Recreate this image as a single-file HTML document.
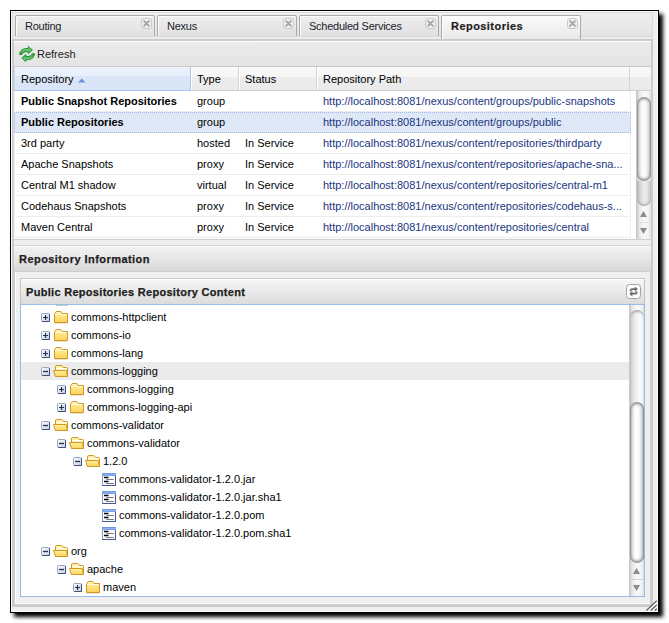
<!DOCTYPE html>
<html><head><meta charset="utf-8">
<style>
*{box-sizing:border-box;margin:0;padding:0}
html,body{width:669px;height:623px;background:#fff;overflow:hidden;position:relative;font-family:"Liberation Sans",sans-serif;font-size:11px;color:#000}
.a{position:absolute}
#win{left:10px;top:10px;width:649px;height:603px;border:1px solid #000;background:#efefef;box-shadow:4px 4px 4px 0 rgba(0,0,0,1),inset 1px 1px 0 #fafafa,inset -1px -1px 0 #fafafa}
#strip{left:12px;top:12px;width:641px;height:27px;border:1px solid #dadada;border-bottom:none;background:linear-gradient(#efefef,#e3e3e3 88.5%,#d9d9d9 88.5%,#d9d9d9 92.3%,#ececec 92.3%)}
.tab{top:15px;width:140px;height:21px;border:1px solid #a9a9a9;border-bottom:none;border-radius:2px 2px 0 0;background:linear-gradient(#efefef,#e0e0e0);box-shadow:inset 1px 1px 0 #fbfbfb}
.tab span{position:absolute;left:9px;top:4px;letter-spacing:-0.25px;color:#1c1c2c;line-height:13px}
.tab.act{background:linear-gradient(#fbfbfb,#e9e9e9);height:24px}
.tab.act span{font-weight:bold;letter-spacing:0.45px;color:#1e1e1e;-webkit-text-stroke:0.2px #1e1e1e}
.cls{position:absolute;right:2px;top:2px;width:11px;height:11px;border:1px solid #c9c9c9;border-radius:3px;background:#f0f0f0}
#body{left:12px;top:39px;width:641px;height:568px;border:2px solid #cbcbcb;background:#efefef}
#tb{left:14px;top:41px;width:637px;height:26px;border-top:1px solid #fff;border-bottom:1px solid #c8c8c8;background:linear-gradient(#ebebeb,#e4e4e4)}
#hdr{left:14px;top:67px;width:637px;height:24px;border-bottom:1px solid #cfcfcf;background:linear-gradient(#f9f9f9 0,#f5f5f5 45%,#ececec 45%,#eaeaea 100%)}
.hc{position:absolute;top:0;height:23px;border-right:1px solid #d4d4d4;box-shadow:inset 1px 0 0 #fff;line-height:25px;padding-left:6px}
.hc.sort{background:linear-gradient(#ebf2fc 0,#e7effb 41%,#dbe6f7 41%,#d9e5f6 100%);border:1px solid #a9c7ef;border-top:none;border-left-color:#c3d7f3;box-shadow:none;padding-left:6px;height:24px;line-height:25px}
#grid{left:14px;top:91px;width:637px;height:149px;background:#fff;border-bottom:1px solid #d0d0d0}
.row{position:absolute;left:0;width:617px;height:21px;border-bottom:1px solid #ededed;border-right:1px solid #ededed;line-height:20px}
.row.sel{background:#dfe8f6;border-bottom-color:transparent;outline:1px dotted #a3bae9;outline-offset:-1px}
.row span{position:absolute;top:0;white-space:nowrap}
.lnk{color:#1a3580}
.c1{left:7px}.c2{left:183px}.c3{left:231px}.c4{left:309px}

#rih{left:14px;top:245px;width:637px;height:27px;background:linear-gradient(#f3f3f3,#d9d9d9);border-top:1px solid #d3d3d3;border-bottom:1px solid #cdcdcd;box-shadow:inset 0 1px 0 #fafafa}
#rih b,#iph b{position:absolute;left:5px;top:7px;letter-spacing:0.45px;color:#1e1e1e;font-size:11px;-webkit-text-stroke:0.25px #1e1e1e}
#rib{left:14px;top:272px;width:637px;height:333px;background:#efefef;border:1px solid #d0d0d0;border-top:none;box-shadow:inset 1px -1px 0 #fbfbfb}
#ip{left:20px;top:278px;width:625px;height:319px;border:1px solid #c4c4c4;border-top:1px solid #c8c8c8;background:#fff}
#iph{left:21px;top:279px;width:623px;height:25px;background:linear-gradient(#f5f5f5,#dcdcdc);border-top:1px solid #fff}
#iph b{left:5px;top:6px;letter-spacing:0.3px}
#ipb{left:20px;top:304px;width:625px;height:293px;border:1px solid #99bbe8;background:#fff;overflow:hidden}
.tr{position:absolute;left:0;width:669px;height:18px;line-height:18px}
.tr span{top:0;white-space:nowrap;color:#000}
.tr.hl:before{content:"";position:absolute;left:21px;width:608px;top:0;height:18px;background:#ebebeb}
.sb{position:absolute;width:15px;background:linear-gradient(to right,#c9c9c9 0,#c9c9c9 7%,#e6e6e6 20%,#f8f8f8 50%,#f4f4f4 80%,#dedede)}
.th{position:absolute;left:1px;width:14px;border-radius:7px;background:linear-gradient(to right,#8c8c8c 0,#cfcfcf 12%,#f6f6f6 30%,#ffffff 45%,#f3f3f3 68%,#d6d6d6 86%,#858585 100%);box-shadow:inset 0 3px 3px -1px #8a8a8a,inset 0 -3px 3px -1px #8a8a8a}
.tk{position:absolute;left:1px;width:14px;border-radius:0 0 7px 7px;background:linear-gradient(to right,#b4b4b4,#d6d6d6 22%,#ececec 50%,#e4e4e4 75%,#bcbcbc);box-shadow:inset 0 -3px 3px -2px #9a9a9a}
.arr{position:absolute;left:0;width:15px;height:28px}
</style></head><body>
<svg width="0" height="0" style="position:absolute">
<defs>
<linearGradient id="gpb" x1="0" y1="0" x2="1" y2="1"><stop offset="0" stop-color="#ffffff"/><stop offset="1" stop-color="#c3cfe3"/></linearGradient>
<linearGradient id="gfold" x1="0" y1="0" x2="0" y2="1"><stop offset="0" stop-color="#fff6b8"/><stop offset="0.25" stop-color="#ffe98c"/><stop offset="1" stop-color="#fbd35c"/></linearGradient>
<linearGradient id="gfile" x1="0" y1="0" x2="0" y2="1"><stop offset="0" stop-color="#5d8de6"/><stop offset="0.5" stop-color="#8fb1f0"/><stop offset="1" stop-color="#6a98e8"/></linearGradient>
<g id="plus"><rect x="0.5" y="0.5" width="8" height="8" rx="1" fill="url(#gpb)" stroke="#9aa6bd"/><path d="M8.5 1.2V8.5H1.2" fill="none" stroke="#3d4e6e"/><path d="M2 4.5H7M4.5 2V7" stroke="#22324e" stroke-width="1.2"/></g>
<g id="minus"><rect x="0.5" y="0.5" width="8" height="8" rx="1" fill="url(#gpb)" stroke="#9aa6bd"/><path d="M8.5 1.2V8.5H1.2" fill="none" stroke="#3d4e6e"/><path d="M2 4.5H7" stroke="#22324e" stroke-width="1.3"/></g>
<g id="fold"><path d="M0.5 11.5V3Q0.5 2.5 1.2 2.2L2.2 0.5H6.8L8.3 2.5H13.5V11.5Z" fill="url(#gfold)" stroke="#cf9826" stroke-linejoin="round"/><path d="M1.3 3.5H12.7" stroke="#fffbe6" stroke-width="1"/><path d="M2.6 1.5H6.4" stroke="#fff6cc" stroke-width="1"/><path d="M0.5 12.5H13.5" stroke="#e8dcc0" stroke-width="0.8"/></g>
<g id="foldo"><path d="M2.5 11.5V2Q2.5 0.5 3.8 0.5H8.3Q9.4 0.5 9.9 1.6L10.4 2.5H13.5Q14.5 2.5 14.5 3.5V11.5Z" fill="#fff1a6" stroke="#cf9826"/><path d="M3.5 3.6H13.5" stroke="#ffffff" stroke-width="1.2"/><path d="M0.5 5.5H13.2L14.5 11.5H2.5Z" fill="url(#gfold)" stroke="#cf9826" stroke-linejoin="round"/></g>
<g id="file"><rect x="0.5" y="0.5" width="13" height="12" fill="#fbfcff" stroke="#8b9cc0"/><path d="M13.5 1V12.5H0.5" fill="none" stroke="#46598a"/><rect x="0" y="0" width="14" height="3" fill="url(#gfile)"/><path d="M2 4.5H6.5M2 8.5H6.5" stroke="#000" stroke-width="1.5"/><path d="M4.2 6.5H11.8M4.2 10.5H11.8" stroke="#7a7a7a" stroke-width="1.2"/></g>
</defs></svg>

<div id="win" class="a"></div>
<div id="strip" class="a"></div>
<div class="a tab" style="left:15px"><span>Routing</span><i class="cls"><svg width="9" height="9" style="position:absolute;left:0;top:0"><path d="M2.1 2.1L6.9 6.9M6.9 2.1L2.1 6.9" stroke="#a6a6a6" stroke-width="2" stroke-linecap="round"/></svg></i></div>
<div class="a tab" style="left:157px"><span>Nexus</span><i class="cls"><svg width="9" height="9" style="position:absolute;left:0;top:0"><path d="M2.1 2.1L6.9 6.9M6.9 2.1L2.1 6.9" stroke="#a6a6a6" stroke-width="2" stroke-linecap="round"/></svg></i></div>
<div class="a tab" style="left:299px"><span>Scheduled Services</span><i class="cls"><svg width="9" height="9" style="position:absolute;left:0;top:0"><path d="M2.1 2.1L6.9 6.9M6.9 2.1L2.1 6.9" stroke="#a6a6a6" stroke-width="2" stroke-linecap="round"/></svg></i></div>
<div id="body" class="a"></div>
<div class="a tab act" style="left:441px"><span>Repositories</span><i class="cls"><svg width="9" height="9" style="position:absolute;left:0;top:0"><path d="M2.1 2.1L6.9 6.9M6.9 2.1L2.1 6.9" stroke="#a6a6a6" stroke-width="2" stroke-linecap="round"/></svg></i></div>
<div id="tb" class="a"><svg class="a" style="left:5px;top:4px" width="17" height="17"><defs><linearGradient id="gg" x1="0" y1="0" x2="0" y2="1"><stop offset="0" stop-color="#8fd58f"/><stop offset="0.6" stop-color="#55b85a"/><stop offset="1" stop-color="#2e9a38"/></linearGradient></defs><g id="rf"><path d="M0.7 8.4C0.9 4.5 3.7 2.5 8 2.5H9.3V0.6L13.4 4.1L9.3 7.6V5.7H8.2C5.3 5.7 3.6 6.6 3 8.4Z" fill="url(#gg)" stroke="#1e8a2b" stroke-width="0.9" stroke-linejoin="round"/></g><g transform="rotate(180 8.1 8.1)"><path d="M0.7 8.4C0.9 4.5 3.7 2.5 8 2.5H9.3V0.6L13.4 4.1L9.3 7.6V5.7H8.2C5.3 5.7 3.6 6.6 3 8.4Z" fill="url(#gg)" stroke="#1e8a2b" stroke-width="0.9" stroke-linejoin="round"/></g></svg><span class="a" style="left:23px;top:6px;color:#222">Refresh</span></div>
<div id="hdr" class="a">
  <div class="hc sort" style="left:0;width:177px">Repository<svg class="a" style="left:63px;top:11px" width="8" height="5"><path d="M0 4.5L3.75 0.5L7.5 4.5Z" fill="#6a94d8"/></svg></div>
  <div class="hc" style="left:177px;width:48px">Type</div>
  <div class="hc" style="left:225px;width:78px">Status</div>
  <div class="hc" style="left:303px;width:313px">Repository Path</div>
</div>
<div id="grid" class="a"><div class="a" style="left:-1px;top:0;width:1px;height:148px;background:#d8d8d8"></div><div class="a" style="left:0;top:0;width:1px;height:147px;background:#f1f1f1"></div>
  <div class="row" style="top:0"><span class="c1"><b>Public Snapshot Repositories</b></span><span class="c2">group</span><span class="c4 lnk">http://localhost:8081/nexus/content/groups/public-snapshots</span></div>
  <div class="row sel" style="top:21px"><span class="c1"><b>Public Repositories</b></span><span class="c2">group</span><span class="c4 lnk">http://localhost:8081/nexus/content/groups/public</span></div>
  <div class="row" style="top:42px"><span class="c1">3rd party</span><span class="c2">hosted</span><span class="c3">In Service</span><span class="c4 lnk">http://localhost:8081/nexus/content/repositories/thirdparty</span></div>
  <div class="row" style="top:63px"><span class="c1">Apache Snapshots</span><span class="c2">proxy</span><span class="c3">In Service</span><span class="c4 lnk">http://localhost:8081/nexus/content/repositories/apache-sna...</span></div>
  <div class="row" style="top:84px"><span class="c1">Central M1 shadow</span><span class="c2">virtual</span><span class="c3">In Service</span><span class="c4 lnk">http://localhost:8081/nexus/content/repositories/central-m1</span></div>
  <div class="row" style="top:105px"><span class="c1">Codehaus Snapshots</span><span class="c2">proxy</span><span class="c3">In Service</span><span class="c4 lnk">http://localhost:8081/nexus/content/repositories/codehaus-s...</span></div>
  <div class="row" style="top:126px"><span class="c1">Maven Central</span><span class="c2">proxy</span><span class="c3">In Service</span><span class="c4 lnk">http://localhost:8081/nexus/content/repositories/central</span></div>
</div>

<div id="rih" class="a"><b>Repository Information</b></div>
<div id="rib" class="a"></div>
<div id="ip" class="a"></div>
<div id="ipb" class="a"></div>
<div id="tree"><div class="a" style="left:56px;top:305px;width:12px;height:1px;background:#cbcbcb"></div>
<div class="a tr" style="top:308px"><svg class="a" style="left:41px;top:5px" width="9" height="9"><rect x="0.5" y="0.5" width="8" height="8" rx="1" fill="url(#gpb)" stroke="#9aa6bd"/><path d="M8.5 1.2V8.5H1.2" fill="none" stroke="#3d4e6e"/><path d="M2 4.5H7M4.5 2V7" stroke="#22324e" stroke-width="1.2"/></svg><svg class="a" style="left:54px;top:3px" width="15" height="13"><path d="M0.5 11.5V3Q0.5 2.5 1.2 2.2L2.2 0.5H6.8L8.3 2.5H13.5V11.5Z" fill="url(#gfold)" stroke="#cf9826" stroke-linejoin="round"/><path d="M1.3 3.5H12.7" stroke="#fffbe6" stroke-width="1"/><path d="M2.6 1.5H6.4" stroke="#fff6cc" stroke-width="1"/><path d="M0.5 12.5H13.5" stroke="#e8dcc0" stroke-width="0.8"/></svg><span class="a" style="left:71px">commons-httpclient</span></div>
<div class="a tr" style="top:326px"><svg class="a" style="left:41px;top:5px" width="9" height="9"><rect x="0.5" y="0.5" width="8" height="8" rx="1" fill="url(#gpb)" stroke="#9aa6bd"/><path d="M8.5 1.2V8.5H1.2" fill="none" stroke="#3d4e6e"/><path d="M2 4.5H7M4.5 2V7" stroke="#22324e" stroke-width="1.2"/></svg><svg class="a" style="left:54px;top:3px" width="15" height="13"><path d="M0.5 11.5V3Q0.5 2.5 1.2 2.2L2.2 0.5H6.8L8.3 2.5H13.5V11.5Z" fill="url(#gfold)" stroke="#cf9826" stroke-linejoin="round"/><path d="M1.3 3.5H12.7" stroke="#fffbe6" stroke-width="1"/><path d="M2.6 1.5H6.4" stroke="#fff6cc" stroke-width="1"/><path d="M0.5 12.5H13.5" stroke="#e8dcc0" stroke-width="0.8"/></svg><span class="a" style="left:71px">commons-io</span></div>
<div class="a tr" style="top:344px"><svg class="a" style="left:41px;top:5px" width="9" height="9"><rect x="0.5" y="0.5" width="8" height="8" rx="1" fill="url(#gpb)" stroke="#9aa6bd"/><path d="M8.5 1.2V8.5H1.2" fill="none" stroke="#3d4e6e"/><path d="M2 4.5H7M4.5 2V7" stroke="#22324e" stroke-width="1.2"/></svg><svg class="a" style="left:54px;top:3px" width="15" height="13"><path d="M0.5 11.5V3Q0.5 2.5 1.2 2.2L2.2 0.5H6.8L8.3 2.5H13.5V11.5Z" fill="url(#gfold)" stroke="#cf9826" stroke-linejoin="round"/><path d="M1.3 3.5H12.7" stroke="#fffbe6" stroke-width="1"/><path d="M2.6 1.5H6.4" stroke="#fff6cc" stroke-width="1"/><path d="M0.5 12.5H13.5" stroke="#e8dcc0" stroke-width="0.8"/></svg><span class="a" style="left:71px">commons-lang</span></div>
<div class="a tr hl" style="top:362px"><svg class="a" style="left:41px;top:5px" width="9" height="9"><rect x="0.5" y="0.5" width="8" height="8" rx="1" fill="url(#gpb)" stroke="#9aa6bd"/><path d="M8.5 1.2V8.5H1.2" fill="none" stroke="#3d4e6e"/><path d="M2 4.5H7" stroke="#22324e" stroke-width="1.3"/></svg><svg class="a" style="left:53px;top:3px" width="16" height="13"><path d="M2.5 11.5V2Q2.5 0.5 3.8 0.5H8.3Q9.4 0.5 9.9 1.6L10.4 2.5H13.5Q14.5 2.5 14.5 3.5V11.5Z" fill="#fff1a6" stroke="#cf9826"/><path d="M3.5 3.6H13.5" stroke="#ffffff" stroke-width="1.2"/><path d="M0.5 5.5H13.2L14.5 11.5H2.5Z" fill="url(#gfold)" stroke="#cf9826" stroke-linejoin="round"/></svg><span class="a" style="left:71px">commons-logging</span></div>
<div class="a tr" style="top:380px"><svg class="a" style="left:57px;top:5px" width="9" height="9"><rect x="0.5" y="0.5" width="8" height="8" rx="1" fill="url(#gpb)" stroke="#9aa6bd"/><path d="M8.5 1.2V8.5H1.2" fill="none" stroke="#3d4e6e"/><path d="M2 4.5H7M4.5 2V7" stroke="#22324e" stroke-width="1.2"/></svg><svg class="a" style="left:70px;top:3px" width="15" height="13"><path d="M0.5 11.5V3Q0.5 2.5 1.2 2.2L2.2 0.5H6.8L8.3 2.5H13.5V11.5Z" fill="url(#gfold)" stroke="#cf9826" stroke-linejoin="round"/><path d="M1.3 3.5H12.7" stroke="#fffbe6" stroke-width="1"/><path d="M2.6 1.5H6.4" stroke="#fff6cc" stroke-width="1"/><path d="M0.5 12.5H13.5" stroke="#e8dcc0" stroke-width="0.8"/></svg><span class="a" style="left:87px">commons-logging</span></div>
<div class="a tr" style="top:398px"><svg class="a" style="left:57px;top:5px" width="9" height="9"><rect x="0.5" y="0.5" width="8" height="8" rx="1" fill="url(#gpb)" stroke="#9aa6bd"/><path d="M8.5 1.2V8.5H1.2" fill="none" stroke="#3d4e6e"/><path d="M2 4.5H7M4.5 2V7" stroke="#22324e" stroke-width="1.2"/></svg><svg class="a" style="left:70px;top:3px" width="15" height="13"><path d="M0.5 11.5V3Q0.5 2.5 1.2 2.2L2.2 0.5H6.8L8.3 2.5H13.5V11.5Z" fill="url(#gfold)" stroke="#cf9826" stroke-linejoin="round"/><path d="M1.3 3.5H12.7" stroke="#fffbe6" stroke-width="1"/><path d="M2.6 1.5H6.4" stroke="#fff6cc" stroke-width="1"/><path d="M0.5 12.5H13.5" stroke="#e8dcc0" stroke-width="0.8"/></svg><span class="a" style="left:87px">commons-logging-api</span></div>
<div class="a tr" style="top:416px"><svg class="a" style="left:41px;top:5px" width="9" height="9"><rect x="0.5" y="0.5" width="8" height="8" rx="1" fill="url(#gpb)" stroke="#9aa6bd"/><path d="M8.5 1.2V8.5H1.2" fill="none" stroke="#3d4e6e"/><path d="M2 4.5H7" stroke="#22324e" stroke-width="1.3"/></svg><svg class="a" style="left:53px;top:3px" width="16" height="13"><path d="M2.5 11.5V2Q2.5 0.5 3.8 0.5H8.3Q9.4 0.5 9.9 1.6L10.4 2.5H13.5Q14.5 2.5 14.5 3.5V11.5Z" fill="#fff1a6" stroke="#cf9826"/><path d="M3.5 3.6H13.5" stroke="#ffffff" stroke-width="1.2"/><path d="M0.5 5.5H13.2L14.5 11.5H2.5Z" fill="url(#gfold)" stroke="#cf9826" stroke-linejoin="round"/></svg><span class="a" style="left:71px">commons-validator</span></div>
<div class="a tr" style="top:434px"><svg class="a" style="left:57px;top:5px" width="9" height="9"><rect x="0.5" y="0.5" width="8" height="8" rx="1" fill="url(#gpb)" stroke="#9aa6bd"/><path d="M8.5 1.2V8.5H1.2" fill="none" stroke="#3d4e6e"/><path d="M2 4.5H7" stroke="#22324e" stroke-width="1.3"/></svg><svg class="a" style="left:69px;top:3px" width="16" height="13"><path d="M2.5 11.5V2Q2.5 0.5 3.8 0.5H8.3Q9.4 0.5 9.9 1.6L10.4 2.5H13.5Q14.5 2.5 14.5 3.5V11.5Z" fill="#fff1a6" stroke="#cf9826"/><path d="M3.5 3.6H13.5" stroke="#ffffff" stroke-width="1.2"/><path d="M0.5 5.5H13.2L14.5 11.5H2.5Z" fill="url(#gfold)" stroke="#cf9826" stroke-linejoin="round"/></svg><span class="a" style="left:87px">commons-validator</span></div>
<div class="a tr" style="top:452px"><svg class="a" style="left:73px;top:5px" width="9" height="9"><rect x="0.5" y="0.5" width="8" height="8" rx="1" fill="url(#gpb)" stroke="#9aa6bd"/><path d="M8.5 1.2V8.5H1.2" fill="none" stroke="#3d4e6e"/><path d="M2 4.5H7" stroke="#22324e" stroke-width="1.3"/></svg><svg class="a" style="left:85px;top:3px" width="16" height="13"><path d="M2.5 11.5V2Q2.5 0.5 3.8 0.5H8.3Q9.4 0.5 9.9 1.6L10.4 2.5H13.5Q14.5 2.5 14.5 3.5V11.5Z" fill="#fff1a6" stroke="#cf9826"/><path d="M3.5 3.6H13.5" stroke="#ffffff" stroke-width="1.2"/><path d="M0.5 5.5H13.2L14.5 11.5H2.5Z" fill="url(#gfold)" stroke="#cf9826" stroke-linejoin="round"/></svg><span class="a" style="left:103px">1.2.0</span></div>
<div class="a tr" style="top:470px"><svg class="a" style="left:102px;top:3px" width="14" height="13"><rect x="0.5" y="0.5" width="13" height="12" fill="#fbfcff" stroke="#8b9cc0"/><path d="M13.5 1V12.5H0.5" fill="none" stroke="#46598a"/><rect x="0" y="0" width="14" height="3" fill="url(#gfile)"/><path d="M2 4.5H6.5M2 8.5H6.5" stroke="#000" stroke-width="1.5"/><path d="M4.2 6.5H11.8M4.2 10.5H11.8" stroke="#7a7a7a" stroke-width="1.2"/></svg><span class="a" style="left:119px">commons-validator-1.2.0.jar</span></div>
<div class="a tr" style="top:488px"><svg class="a" style="left:102px;top:3px" width="14" height="13"><rect x="0.5" y="0.5" width="13" height="12" fill="#fbfcff" stroke="#8b9cc0"/><path d="M13.5 1V12.5H0.5" fill="none" stroke="#46598a"/><rect x="0" y="0" width="14" height="3" fill="url(#gfile)"/><path d="M2 4.5H6.5M2 8.5H6.5" stroke="#000" stroke-width="1.5"/><path d="M4.2 6.5H11.8M4.2 10.5H11.8" stroke="#7a7a7a" stroke-width="1.2"/></svg><span class="a" style="left:119px">commons-validator-1.2.0.jar.sha1</span></div>
<div class="a tr" style="top:506px"><svg class="a" style="left:102px;top:3px" width="14" height="13"><rect x="0.5" y="0.5" width="13" height="12" fill="#fbfcff" stroke="#8b9cc0"/><path d="M13.5 1V12.5H0.5" fill="none" stroke="#46598a"/><rect x="0" y="0" width="14" height="3" fill="url(#gfile)"/><path d="M2 4.5H6.5M2 8.5H6.5" stroke="#000" stroke-width="1.5"/><path d="M4.2 6.5H11.8M4.2 10.5H11.8" stroke="#7a7a7a" stroke-width="1.2"/></svg><span class="a" style="left:119px">commons-validator-1.2.0.pom</span></div>
<div class="a tr" style="top:524px"><svg class="a" style="left:102px;top:3px" width="14" height="13"><rect x="0.5" y="0.5" width="13" height="12" fill="#fbfcff" stroke="#8b9cc0"/><path d="M13.5 1V12.5H0.5" fill="none" stroke="#46598a"/><rect x="0" y="0" width="14" height="3" fill="url(#gfile)"/><path d="M2 4.5H6.5M2 8.5H6.5" stroke="#000" stroke-width="1.5"/><path d="M4.2 6.5H11.8M4.2 10.5H11.8" stroke="#7a7a7a" stroke-width="1.2"/></svg><span class="a" style="left:119px">commons-validator-1.2.0.pom.sha1</span></div>
<div class="a tr" style="top:542px"><svg class="a" style="left:41px;top:5px" width="9" height="9"><rect x="0.5" y="0.5" width="8" height="8" rx="1" fill="url(#gpb)" stroke="#9aa6bd"/><path d="M8.5 1.2V8.5H1.2" fill="none" stroke="#3d4e6e"/><path d="M2 4.5H7" stroke="#22324e" stroke-width="1.3"/></svg><svg class="a" style="left:53px;top:3px" width="16" height="13"><path d="M2.5 11.5V2Q2.5 0.5 3.8 0.5H8.3Q9.4 0.5 9.9 1.6L10.4 2.5H13.5Q14.5 2.5 14.5 3.5V11.5Z" fill="#fff1a6" stroke="#cf9826"/><path d="M3.5 3.6H13.5" stroke="#ffffff" stroke-width="1.2"/><path d="M0.5 5.5H13.2L14.5 11.5H2.5Z" fill="url(#gfold)" stroke="#cf9826" stroke-linejoin="round"/></svg><span class="a" style="left:71px">org</span></div>
<div class="a tr" style="top:560px"><svg class="a" style="left:57px;top:5px" width="9" height="9"><rect x="0.5" y="0.5" width="8" height="8" rx="1" fill="url(#gpb)" stroke="#9aa6bd"/><path d="M8.5 1.2V8.5H1.2" fill="none" stroke="#3d4e6e"/><path d="M2 4.5H7" stroke="#22324e" stroke-width="1.3"/></svg><svg class="a" style="left:69px;top:3px" width="16" height="13"><path d="M2.5 11.5V2Q2.5 0.5 3.8 0.5H8.3Q9.4 0.5 9.9 1.6L10.4 2.5H13.5Q14.5 2.5 14.5 3.5V11.5Z" fill="#fff1a6" stroke="#cf9826"/><path d="M3.5 3.6H13.5" stroke="#ffffff" stroke-width="1.2"/><path d="M0.5 5.5H13.2L14.5 11.5H2.5Z" fill="url(#gfold)" stroke="#cf9826" stroke-linejoin="round"/></svg><span class="a" style="left:87px">apache</span></div>
<div class="a tr" style="top:578px"><svg class="a" style="left:73px;top:5px" width="9" height="9"><rect x="0.5" y="0.5" width="8" height="8" rx="1" fill="url(#gpb)" stroke="#9aa6bd"/><path d="M8.5 1.2V8.5H1.2" fill="none" stroke="#3d4e6e"/><path d="M2 4.5H7M4.5 2V7" stroke="#22324e" stroke-width="1.2"/></svg><svg class="a" style="left:86px;top:3px" width="15" height="13"><path d="M0.5 11.5V3Q0.5 2.5 1.2 2.2L2.2 0.5H6.8L8.3 2.5H13.5V11.5Z" fill="url(#gfold)" stroke="#cf9826" stroke-linejoin="round"/><path d="M1.3 3.5H12.7" stroke="#fffbe6" stroke-width="1"/><path d="M2.6 1.5H6.4" stroke="#fff6cc" stroke-width="1"/><path d="M0.5 12.5H13.5" stroke="#e8dcc0" stroke-width="0.8"/></svg><span class="a" style="left:103px">maven</span></div>
</div>
<div id="iph" class="a"><b>Public Repositories Repository Content</b>
<svg class="a" style="left:605px;top:4px" width="15" height="15"><rect x="0.5" y="0.5" width="14" height="14" rx="3" fill="#fdfdfd" stroke="#a3a3a3"/><g id="ra"><path d="M3.6 7.4Q3.6 4.2 6.6 4.2H8.8V2.4L11.9 5.1L8.8 7.8V6H6.7Q5.3 6 5.3 7.4Z" fill="#6a6a6a"/></g><g transform="rotate(180 7.6 7.4)"><path d="M3.6 7.4Q3.6 4.2 6.6 4.2H8.8V2.4L11.9 5.1L8.8 7.8V6H6.7Q5.3 6 5.3 7.4Z" fill="#6a6a6a"/></g></svg>
</div>
<div class="sb" style="left:629px;top:305px;height:291px">
  <div class="tk" style="top:5px;height:95px;border-radius:7px 7px 0 0;background:linear-gradient(to right,#c4c4c4,#e4e4e4 25%,#f6f6f6 55%,#fafafa 80%,#e0e0e0);box-shadow:inset 0 3px 3px -2px #8a8a8a"></div>
  <div class="th" style="top:97px;height:161px"></div>
  <svg class="arr" style="top:261px" width="15" height="30"><path d="M4 8L7.5 2L11 8Z" fill="#8c8c8c"/><path d="M1 13.5H14" stroke="#d4d4d4"/><path d="M4 19L7.5 25L11 19Z" fill="#8c8c8c"/></svg>
</div>
<div class="sb" style="left:636px;top:91px;height:148px">
  <div class="th" style="top:6px;height:84px"></div>
  <div class="tk" style="top:90px;height:25px"></div>
  <svg class="arr" style="top:117px" width="15" height="30"><path d="M4 9L7.5 3L11 9Z" fill="#8c8c8c"/><path d="M1 14.5H14" stroke="#dcdcdc"/><path d="M4 20L7.5 26L11 20Z" fill="#8c8c8c"/></svg>
</div>
<svg class="a" style="left:645px;top:599px" width="13" height="13"><path d="M1.5 11.5L11.8 1.8M5.8 11.5L11.8 6M9.8 11.5L11.8 9.8" stroke="#5a5a5a" stroke-width="1.3"/><path d="M2.8 11.8L11.8 3.2M7 11.8L11.8 7.4" stroke="#fff" stroke-width="0.8"/></svg>
</body></html>
